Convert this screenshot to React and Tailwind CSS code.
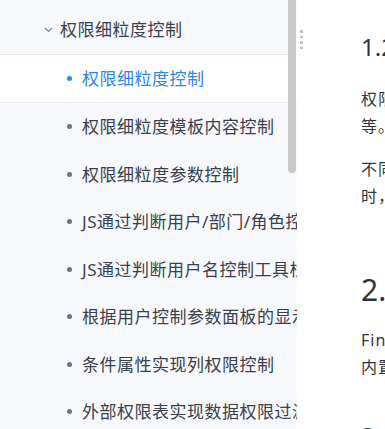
import React from "react";

const items = [
  "权限细粒度模板内容控制",
  "权限细粒度参数控制",
  "JS通过判断用户/部门/角色控制工具栏按钮",
  "JS通过判断用户名控制工具栏按钮",
  "根据用户控制参数面板的显示",
  "条件属性实现列权限控制",
  "外部权限表实现数据权限过滤",
];

export default function App() {
  const font = { fontFamily: '"Noto Sans", "Noto Sans CJK SC", sans-serif' };
  return (
    <div className="flex w-[385px] h-[429px] overflow-hidden bg-white" style={font}>
      <div className="relative w-[297px] shrink-0 bg-[#f7f8fc] pt-[6px] overflow-hidden">
        <div className="flex items-center h-12 pl-[44px] text-[17px] tracking-[0.5px] text-[#3a404c] whitespace-nowrap">
          <svg width="9" height="6" viewBox="0 0 9 6" className="mr-[7px]">
            <path d="M1 1l3.5 3.5L8 1" fill="none" stroke="#7d8596" strokeWidth="1.2" />
          </svg>
          <span>权限细粒度控制</span>
        </div>
        <div className="flex items-center h-[49px] border-y border-[#e9ebef] bg-white pl-[67px] text-[17px] tracking-[0.5px] text-[#2f86e6] whitespace-nowrap">
          <span className="w-[5px] h-[5px] rounded-full bg-[#2f86e6] mr-[10px]" />
          <span>权限细粒度控制</span>
        </div>
        {items.map((t) => (
          <div
            key={t}
            className="flex items-center h-[47.5px] pl-[67px] text-[17px] tracking-[0.5px] text-[#3a404c] whitespace-nowrap"
          >
            <span className="w-[5px] h-[5px] rounded-full bg-[#6b7385] mr-[10px] shrink-0" />
            <span>{t}</span>
          </div>
        ))}
        <div className="absolute right-[1px] top-0 w-[8px] h-[173px] rounded-b-full bg-[#c9c9c9]" />
      </div>
      <div className="relative flex-1 bg-white">
        <div className="absolute left-[3px] top-[30px] flex flex-col gap-[3px]">
          <span className="w-[2.5px] h-[2.5px] bg-[#b9c3d2]" />
          <span className="w-[2.5px] h-[2.5px] bg-[#b9c3d2]" />
          <span className="w-[2.5px] h-[2.5px] bg-[#b9c3d2]" />
          <span className="w-[2.5px] h-[2.5px] bg-[#b9c3d2]" />
        </div>
        <div className="pl-[64px] pt-[31px] w-[700px] text-[#2f3642] whitespace-nowrap">
          <div className="text-[24px] leading-[32px] text-[#2c3440]">1.2 概述</div>
          <div className="mt-[23px] text-[16px] leading-[27px] tracking-[1px]">
            <div>权限细粒度控制可以控制模板内容、参数、工具栏按钮</div>
            <div>等。</div>
          </div>
          <div className="mt-[16px] text-[16px] leading-[27px] tracking-[1px]">
            <div>不同的用户登录平台查看同一张报表</div>
            <div>时，看到的内容不同。</div>
          </div>
          <div className="mt-[60px] text-[30px] leading-[40px] text-[#2c3440]">2. 示例</div>
          <div className="mt-[17px] text-[16px] leading-[27px] tracking-[1px]">
            <div>FineReport 提供了多种权限控制方式</div>
            <div>内置</div>
          </div>
          <div className="mt-[39px] text-[24px] leading-[32px] text-[#2c3440]">2.1 模板</div>
        </div>
      </div>
    </div>
  );
}
